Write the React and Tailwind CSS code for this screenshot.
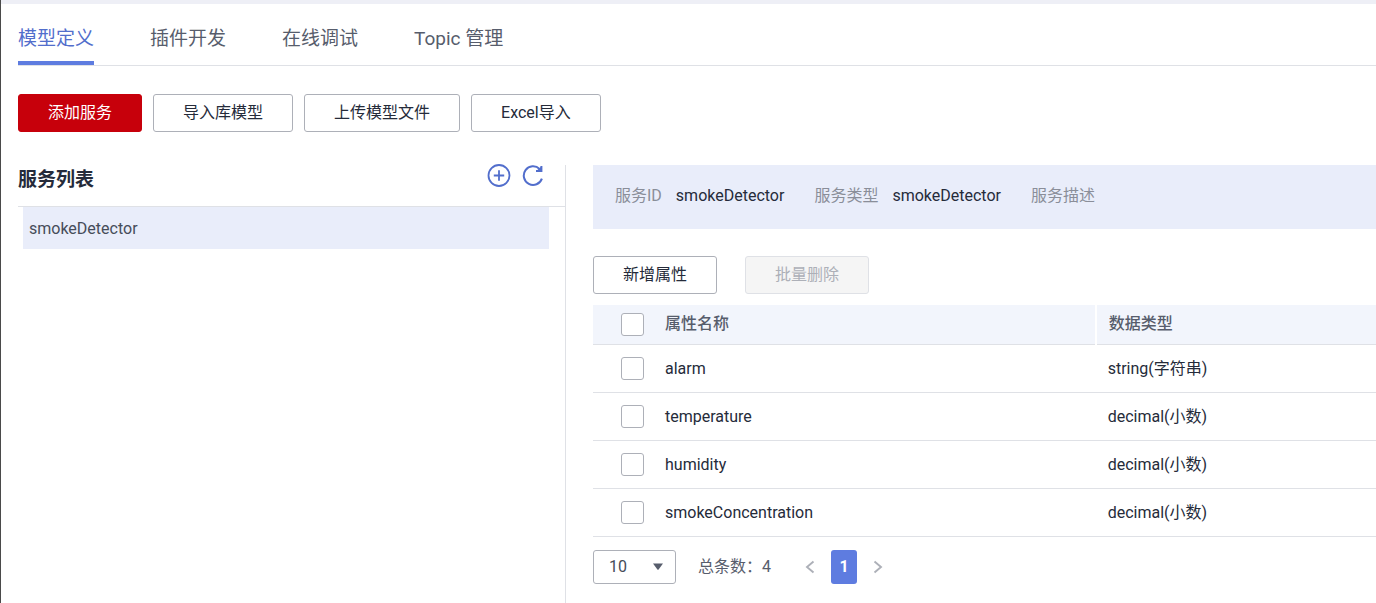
const tabs = ['模型定义', '插件开发', '在线调试', 'Topic 管理'];

const properties = [
  { name: 'alarm', type: 'string(字符串)' },
  { name: 'temperature', type: 'decimal(小数)' },
  { name: 'humidity', type: 'decimal(小数)' },
  { name: 'smokeConcentration', type: 'decimal(小数)' },
];

function Button({ children, variant = 'default', ...props }) {
  const styles = {
    default: 'border-[#adb0b8] bg-white text-[#252b3a]',
    primary: 'border-[#c7000b] bg-[#c7000b] text-white',
    disabled: 'border-[#dfe1e6] bg-[#f5f5f5] text-[#adb0b8]',
  };
  return (
    <button
      type="button"
      className={`flex h-[38px] items-center rounded-[3px] border px-[29px] pb-px whitespace-nowrap ${styles[variant]}`}
      {...props}
    >
      {children}
    </button>
  );
}

function Checkbox({ label }) {
  return (
    <input
      type="checkbox"
      aria-label={label}
      className="block size-[23px] appearance-none rounded-[3px] border border-[#adb0b8] bg-white checked:bg-[#5e7ce0]"
    />
  );
}

function Field({ label, value }) {
  return (
    <div className="flex gap-[14px]">
      <dt className="text-[#8a8e99]">{label}</dt>
      <dd className="text-[#252b3a]">{value}</dd>
    </div>
  );
}

function AddIcon() {
  return (
    <svg width="24" height="22" viewBox="0 1 24 22" overflow="visible" fill="none" stroke="#526ecc" strokeWidth="1.8">
      <circle cx="12" cy="11.5" r="10.5" />
      <path d="M12 6.3v10.4M6.8 11.5h10.4" />
    </svg>
  );
}

function RefreshIcon() {
  return (
    <svg width="22" height="22" viewBox="0 0 22 22" fill="none" stroke="#526ecc" strokeWidth="2">
      <path d="M19.9 13.6A9.3 9.3 0 1 1 17.6 4" />
      <path d="M19.4 1V6H14" />
      <path d="M19.4 1.4V6H14.4L17 3.4Z" fill="#526ecc" stroke="none" />
    </svg>
  );
}

export default function App() {
  return (
    <div className="flex min-h-screen flex-col border-l border-[#4a4a4a] bg-white font-[Roboto,'Noto_Sans_CJK_SC',sans-serif] text-[16px] leading-6 text-[#252b3a]">
      <div className="h-1 bg-[#eeeff6]" />
      <nav className="ml-[17px] flex h-[62px] gap-14 border-b border-[#dfe1e6] text-[19px]">
        {tabs.map((tab, i) => (
          <a
            key={tab}
            href="#"
            aria-current={i === 0 ? 'page' : undefined}
            className={
              i === 0
                ? 'flex items-center border-b-4 border-[#5e7ce0] pt-4 pb-1 text-[#526ecc]'
                : 'flex items-center pt-4 pb-2 text-[#575d6c]'
            }
          >
            {tab}
          </a>
        ))}
      </nav>
      <div className="flex flex-wrap gap-[11px] pt-7 pb-[33px] pl-[17px]">
        <Button variant="primary">添加服务</Button>
        <Button>导入库模型</Button>
        <Button>上传模型文件</Button>
        <Button>Excel导入</Button>
      </div>
      <main className="grid flex-1 grid-cols-[minmax(0,548fr)_minmax(0,810fr)] pl-[17px]">
        <aside className="border-r border-[#dfe1e6]">
          <div className="flex h-[42px] items-start justify-between border-b border-[#dfe1e6] pr-[21px]">
            <h2 className="pt-[3px] text-[19px] font-bold">服务列表</h2>
            <div className="flex gap-[11px]">
              <button type="button" aria-label="添加服务" className="h-[22px]">
                <AddIcon />
              </button>
              <button type="button" aria-label="刷新" className="h-[22px]">
                <RefreshIcon />
              </button>
            </div>
          </div>
          <ul className="pr-4 pl-[5px]">
            <li>
              <a href="#" className="flex h-[42px] items-center bg-[#e9edfa] px-[6px] pt-[2px] text-[#464c59]">
                smokeDetector
              </a>
            </li>
          </ul>
        </aside>
        <section className="pl-[27px]">
          <dl className="flex h-16 items-center gap-[30px] bg-[#e9edfa] px-[22px] pb-[2px]">
            <Field label="服务ID" value="smokeDetector" />
            <Field label="服务类型" value="smokeDetector" />
            <Field label="服务描述" value="" />
          </dl>
          <div className="flex gap-7 pt-[27px] pb-[11px]">
            <Button>新增属性</Button>
            <Button variant="disabled" disabled>
              批量删除
            </Button>
          </div>
          <table className="w-full table-fixed border-collapse text-left">
            <thead>
              <tr className="h-[39px] border-b border-[#dfe1e6] bg-[#f2f5fc] text-[#575d6c]">
                <th className="w-[72px] pl-7">
                  <Checkbox label="全选" />
                </th>
                <th className="w-[55%] border-r-2 border-white pb-px font-medium">属性名称</th>
                <th className="pb-px pl-3 font-medium">数据类型</th>
              </tr>
            </thead>
            <tbody>
              {properties.map(({ name, type }) => (
                <tr key={name} className="h-12 border-b border-[#dfe1e6]">
                  <td className="pl-7">
                    <Checkbox label={name} />
                  </td>
                  <td className="pt-px">{name}</td>
                  <td className="pt-px pl-3">{type}</td>
                </tr>
              ))}
            </tbody>
          </table>
          <div className="flex items-center pt-[13px] text-[#575d6c]">
            <div className="grid items-center">
              <select
                aria-label="每页条数"
                className="col-start-1 row-start-1 h-[34px] w-[83px] appearance-none rounded-[3px] border border-[#adb0b8] bg-white pl-[15px] text-[#464c59]"
              >
                <option>10</option>
                <option>20</option>
                <option>50</option>
              </select>
              <svg
                width="10"
                height="7"
                viewBox="0 0 10 7"
                className="pointer-events-none col-start-1 row-start-1 mr-[13px] justify-self-end"
              >
                <path d="M0 .5H10L5.6 6.4Q5 7 4.4 6.4Z" fill="#575d6c" />
              </svg>
            </div>
            <span className="pl-[22px]">总条数：4</span>
            <div className="flex items-center gap-4 pl-[34px]">
              <button type="button" aria-label="上一页">
                <svg width="10" height="14" viewBox="0 0 10 14" fill="none" stroke="#adb0b8" strokeWidth="1.9">
                  <path d="M8.5 1.5L2 7L8.5 12.5" />
                </svg>
              </button>
              <button type="button" className="h-[34px] w-[26px] rounded-[3px] bg-[#5e7ce0] font-bold text-white">
                1
              </button>
              <button type="button" aria-label="下一页">
                <svg width="10" height="14" viewBox="0 0 10 14" fill="none" stroke="#adb0b8" strokeWidth="1.9">
                  <path d="M1.5 1.5L8 7L1.5 12.5" />
                </svg>
              </button>
            </div>
          </div>
        </section>
      </main>
    </div>
  );
}
